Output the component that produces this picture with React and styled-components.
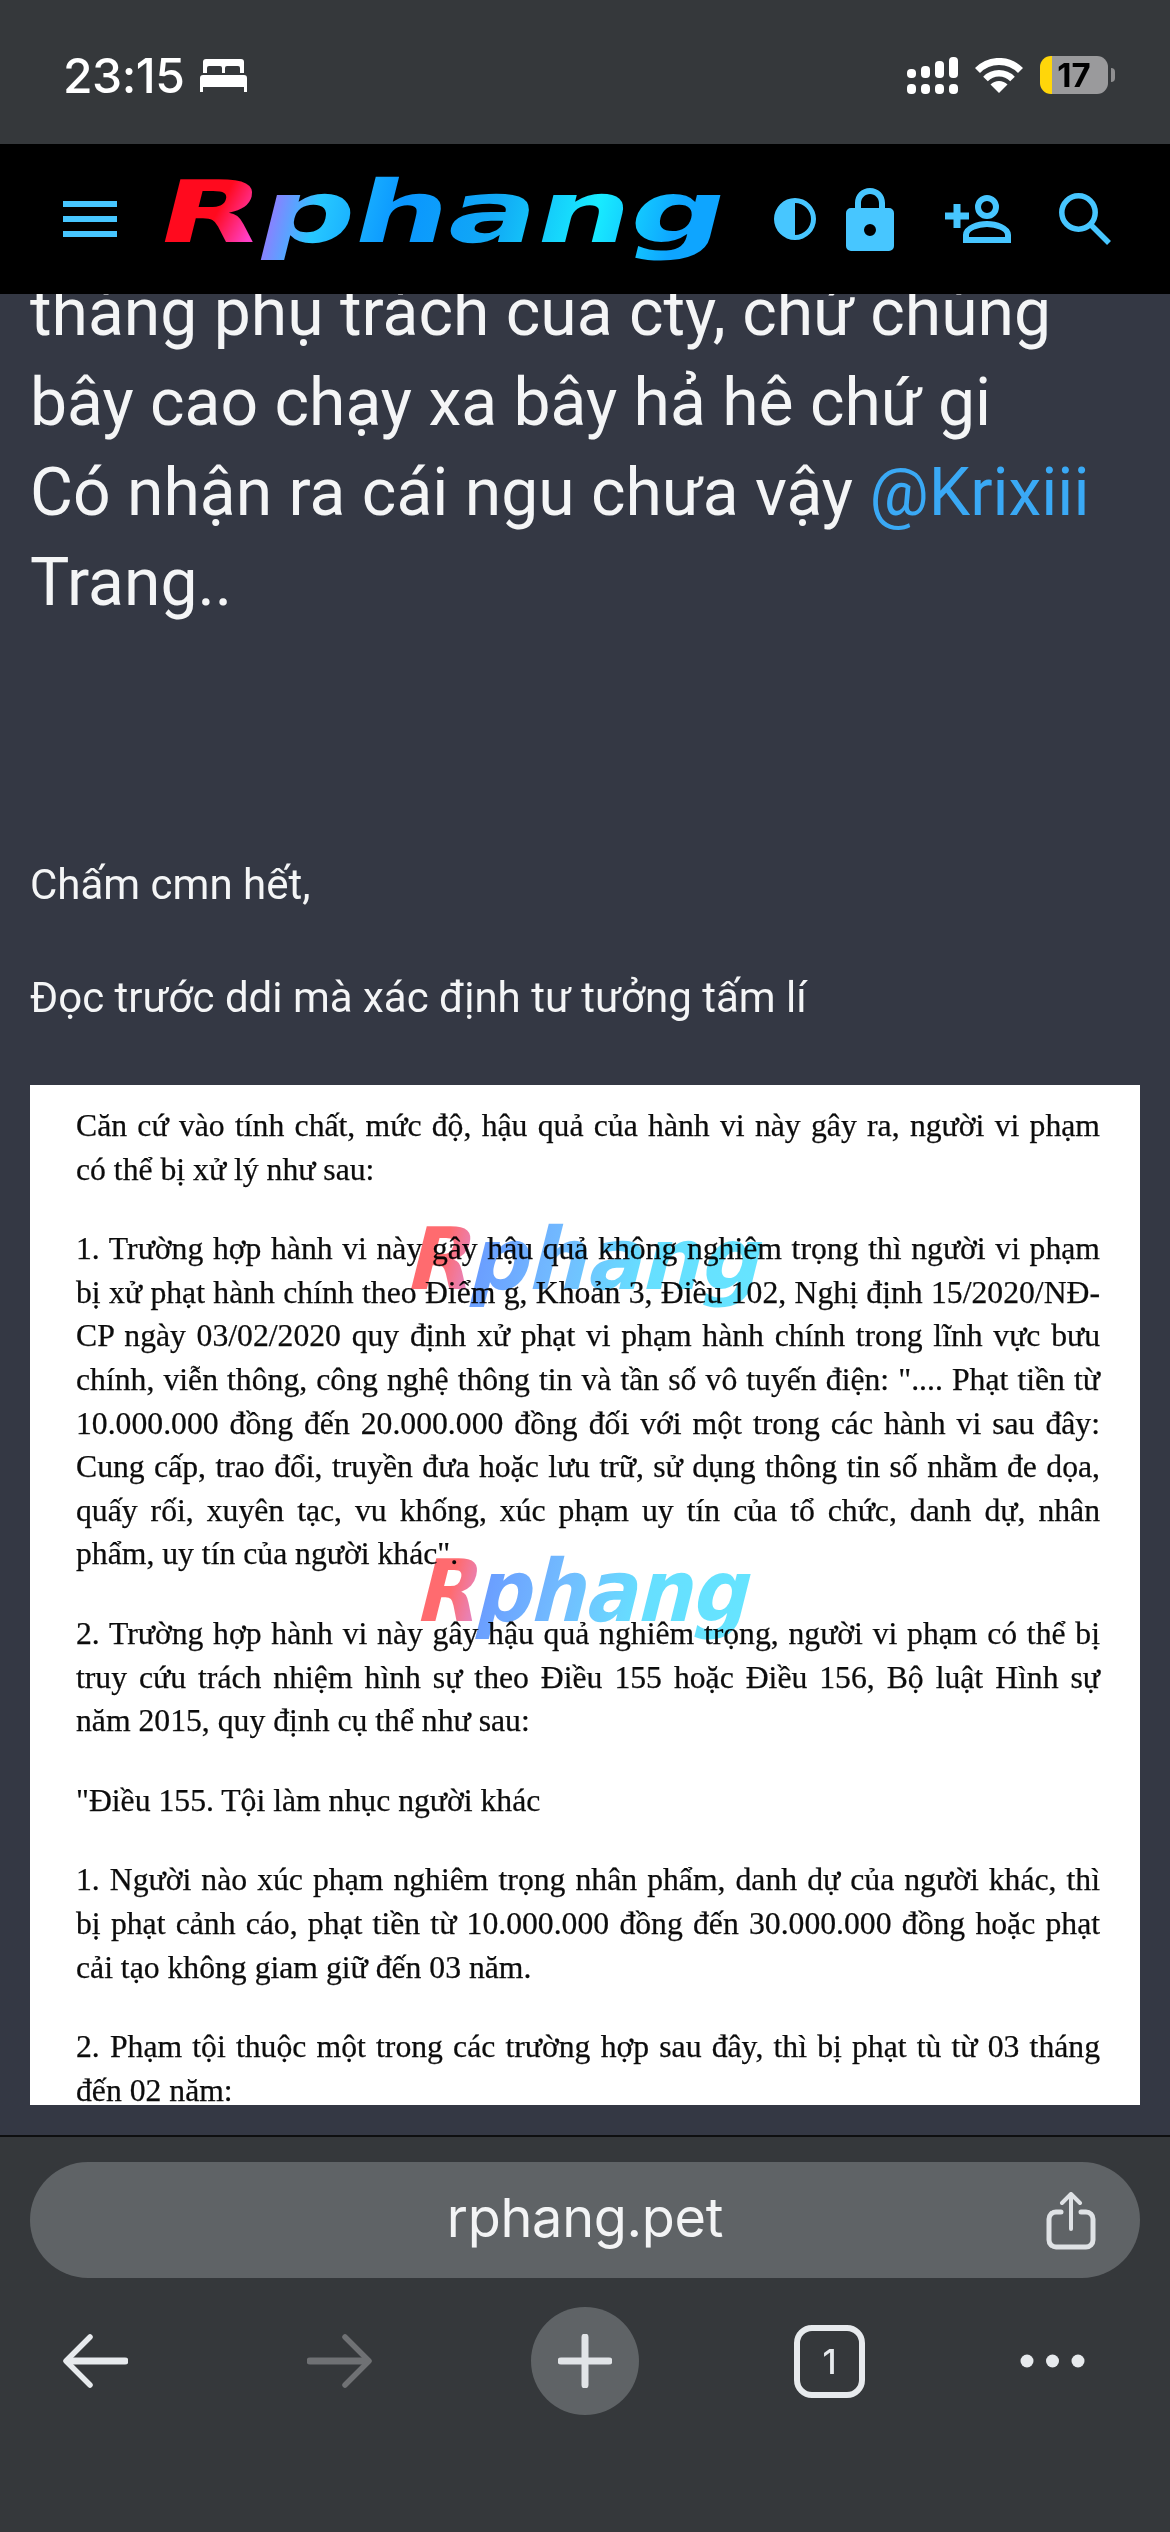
import React from "react";
import styled, { createGlobalStyle } from "styled-components";

const Global = createGlobalStyle`
  html, body { margin: 0; padding: 0; background: #35383b; }
  * { box-sizing: border-box; }
`;
const Page = styled.div`
  width: 1170px; height: 2532px; display: flex; flex-direction: column; overflow: hidden;
  font-family: Roboto, "Noto Sans", sans-serif; background: #343844; color: #fff;
`;
const StatusBar = styled.div`
  height: 144px; flex: none; background: #35383b; display: flex; align-items: center;
  justify-content: space-between; padding: 6px 62px 0 63px;
`;
const StatusGroup = styled.div`display: flex; align-items: center; gap: ${p => p.$gap}px;`;
const Time = styled.span`font: 500 48px Inter, sans-serif; letter-spacing: -0.5px;`;
const Battery = styled.div`
  width: 68px; height: 38px; border-radius: 11px; background: linear-gradient(90deg, #ffd60a 0 12px, #9a9a9c 12px);
  color: #000; font: 700 33px Inter, sans-serif; display: flex; align-items: center; justify-content: center;
  position: relative;
  &::after { content: ""; position: absolute; right: -7px; top: 12px; width: 4px; height: 14px; border-radius: 0 7px 7px 0; background: #8f8f91; }
`;
const Header = styled.header`
  height: 150px; flex: none; background: #000; display: flex; align-items: center; padding: 0 59px 0 63px; color: #47c6ff;
`;
const LogoSlot = styled.div`margin-left: 48px; width: 555px; height: 100px; flex: none; display: flex; align-items: center; padding-bottom: 14px;`;
const LogoText = styled.span`
  display: inline-block; font: 700 ${p => p.$size}px/1.1 "DejaVu Sans", sans-serif; white-space: nowrap;
  letter-spacing: -1px; transform-origin: 0 50%; transform: translateX(-5px) skewX(-14deg) scaleX(${p => p.$sx});
`;
const LogoR = styled.span`
  color: transparent; background: ${p => p.$soft ? "linear-gradient(90deg,#ff6b6f 50%,#e585c0)" : "linear-gradient(100deg,#ff0a1e 55%,#ff40c8 90%)"};
  -webkit-background-clip: text; background-clip: text;
`;
const LogoRest = styled.span`
  color: transparent; background: ${p => p.$soft ? "linear-gradient(90deg,#6a9cff,#72bcff 30%,#66dfff 60%,#66e4ff)" : "linear-gradient(90deg,#a070ff,#27c8ff 12%,#0a96ff 30%,#11a8f5 50%,#18ecff 72%,#0ea5ff 90%)"};
  -webkit-background-clip: text; background-clip: text;
`;
const HeaderIcons = styled.div`display: flex; align-items: center; margin-left: auto; gap: 48px;`;
const IconPair = styled.div`display: flex; align-items: center; gap: 30px; margin-right: 3px;`;
const Content = styled.main`flex: 1; min-height: 0; overflow: hidden; padding: 0 30px;`;
const BigText = styled.div`margin-top: -26px; font-size: 66px; line-height: 90px; color: #f4f5f6;`;
const Mention = styled.span`color: #3aa9f5;`;
const SmallText = styled.p`margin: ${p => p.$top}px 0 0; font-size: 42px; line-height: 56px; color: #f4f5f6;`;
const Doc = styled.article`
  position: relative; margin-top: 59px; height: 1020px; background: #fff; overflow: hidden; padding: 19px 40px 0 46px; color: #0c0c0c;
  font-family: "Liberation Serif", serif; font-size: 31.7px; line-height: 43.6px; -webkit-text-stroke: .25px #0c0c0c;
`;
const Para = styled.p`margin: 0 0 36px;`;
const Line = styled.span`display: block; white-space: nowrap; text-align: justify; text-align-last: ${p => p.$last ? "left" : "justify"};`;
const Watermark = styled.div`
  position: absolute; left: ${p => p.$x}px; top: ${p => p.$y}px; mix-blend-mode: multiply; -webkit-text-stroke: 0;
`;
const BrowserBar = styled.footer`
  height: 397px; flex: none; background: #35383b; border-top: 2px solid #0e0f10; padding: 25px 30px 0;
`;
const UrlPill = styled.div`
  height: 116px; border-radius: 58px; background: #5f6366; position: relative; display: flex; align-items: center; justify-content: center;
  font: 400 54px Inter, sans-serif; letter-spacing: -.3px; color: #f3f4f5; padding-bottom: 6px;
`;
const ShareWrap = styled.div`position: absolute; right: 44px; top: 30px; display: flex;`;
const Nav = styled.nav`
  margin-top: 29px; height: 108px; display: flex; align-items: center; padding-left: 32px; gap: 155px;
`;
const Arrow = styled.svg`flex: none; margin-right: ${p => p.$after}px;`;
const PlusCircle = styled.div`width: 108px; height: 108px; flex: none; border-radius: 50%; background: #5f6366; display: flex; align-items: center; justify-content: center;`;
const TabBox = styled.div`
  width: 71px; height: 73px; flex: none; border: 6px solid #e7eaed; border-radius: 18px; display: flex; align-items: center; justify-content: center;
  font: 500 34px Inter, sans-serif; color: #e7eaed;
`;

function Logo({ size, sx, soft }) {
  return (
    <LogoText $size={size} $sx={sx}>
      <LogoR $soft={soft}>R</LogoR><LogoRest $soft={soft}>phang</LogoRest>
    </LogoText>
  );
}

const doc = [
  ["Căn cứ vào tính chất, mức độ, hậu quả của hành vi này gây ra, người vi phạm", "có thể bị xử lý như sau:"],
  ["1. Trường hợp hành vi này gây hậu quả không nghiêm trọng thì người vi phạm", "bị xử phạt hành chính theo Điểm g, Khoản 3, Điều 102, Nghị định 15/2020/NĐ-", "CP ngày 03/02/2020 quy định xử phạt vi phạm hành chính trong lĩnh vực bưu", "chính, viễn thông, công nghệ thông tin và tần số vô tuyến điện: \".... Phạt tiền từ", "10.000.000 đồng đến 20.000.000 đồng đối với một trong các hành vi sau đây:", "Cung cấp, trao đổi, truyền đưa hoặc lưu trữ, sử dụng thông tin số nhằm đe dọa,", "quấy rối, xuyên tạc, vu khống, xúc phạm uy tín của tổ chức, danh dự, nhân", "phẩm, uy tín của người khác\"."],
  ["2. Trường hợp hành vi này gây hậu quả nghiêm trọng, người vi phạm có thể bị", "truy cứu trách nhiệm hình sự theo Điều 155 hoặc Điều 156, Bộ luật Hình sự", "năm 2015, quy định cụ thể như sau:"],
  ["\"Điều 155. Tội làm nhục người khác"],
  ["1. Người nào xúc phạm nghiêm trọng nhân phẩm, danh dự của người khác, thì", "bị phạt cảnh cáo, phạt tiền từ 10.000.000 đồng đến 30.000.000 đồng hoặc phạt", "cải tạo không giam giữ đến 03 năm."],
  ["2. Phạm tội thuộc một trong các trường hợp sau đây, thì bị phạt tù từ 03 tháng", "đến 02 năm:"],
];

export default function App() {
  return (
    <Page>
      <Global />
      <StatusBar>
        <StatusGroup $gap={16}>
          <Time>23:15</Time>
          <svg width="47" height="33" viewBox="0 0 47 33" fill="#fff">
            <path d="M6 0h35a3 3 0 0 1 3 3v11h-4v-5a2 2 0 0 0-2-2H27a2 2 0 0 0-2 2v5h-3V9a2 2 0 0 0-2-2H9a2 2 0 0 0-2 2v5H3V3a3 3 0 0 1 3-3z" />
            <path d="M3 16h41a3 3 0 0 1 3 3v14h-3v-5H3v5H0V19a3 3 0 0 1 3-3z" />
          </svg>
        </StatusGroup>
        <StatusGroup $gap={17}>
          <svg width="51" height="37" viewBox="0 0 51 37" fill="#fff">
            <rect x="0" y="12" width="9" height="9" rx="4" /><rect x="0" y="27" width="9" height="10" rx="4" />
            <rect x="14" y="9" width="9" height="12" rx="4" /><rect x="14" y="27" width="9" height="10" rx="4" />
            <rect x="28" y="4" width="9" height="17" rx="4" /><rect x="28" y="27" width="9" height="10" rx="4" />
            <rect x="42" y="0" width="9" height="21" rx="4" /><rect x="42" y="27" width="9" height="10" rx="4" />
          </svg>
          <svg width="48" height="35" viewBox="0 0 48 35" fill="none" stroke="#fff">
            <path fill="#fff" stroke="none" d="M24 35 15.500 26.500a12 12 0 0 1 17 0z" />
            <path strokeWidth="6.500" d="M10.500 21a19 19 0 0 1 27 0" />
            <path strokeWidth="7" d="M2.500 12.500a30 30 0 0 1 43 0" />
          </svg>
          <Battery>17</Battery>
        </StatusGroup>
      </StatusBar>
      <Header>
        <svg width="54" height="36" viewBox="0 0 54 36" fill="currentColor">
          <rect width="54" height="6" /><rect y="15" width="54" height="6" /><rect y="30" width="54" height="6" />
        </svg>
        <LogoSlot><Logo size={86} sx={1.555} /></LogoSlot>
        <HeaderIcons>
          <IconPair>
            <svg width="42" height="42" viewBox="0 0 42 42" fill="currentColor">
              <path fillRule="evenodd" d="M21 0a21 21 0 1 1 0 42 21 21 0 0 1 0-42zm0 5v32a16 16 0 0 0 0-32z" />
            </svg>
            <svg width="48" height="63" viewBox="0 0 48 63" fill="currentColor">
              <path fillRule="evenodd" d="M24 0c8.500 0 15 6.500 15 15v5h4a5 5 0 0 1 5 5v33a5 5 0 0 1-5 5H5a5 5 0 0 1-5-5V25a5 5 0 0 1 5-5h4v-5C9 6.500 15.500 0 24 0zm0 6c-5 0-9 4-9 9v5h18v-5c0-5-4-9-9-9zm0 30a6 6 0 1 0 0 12 6 6 0 0 0 0-12z" />
            </svg>
          </IconPair>
          <svg width="66" height="48" viewBox="0 0 66 48" fill="none" stroke="currentColor" strokeWidth="6">
            <circle cx="42" cy="12" r="9" />
            <path d="M21 45v-5c0-7 12-11 21-11s21 4 21 11v5z" />
            <path strokeWidth="7" d="M0 21h24M12 9v24" />
          </svg>
          <svg width="52" height="52" viewBox="0 0 52 52" fill="none" stroke="currentColor" strokeWidth="5.500">
            <circle cx="19.500" cy="19.500" r="16.700" />
            <path d="M32 32l18 18" />
          </svg>
        </HeaderIcons>
      </Header>
      <Content>
        <BigText>
          tháng phụ trách của cty, chứ chúng<br />
          bây cao chạy xa bây hả hê chứ gi<br />
          Có nhận ra cái ngu chưa vậy <Mention>@Krixiii</Mention><br />
          Trang..
        </BigText>
        <SmallText $top={229}>Chấm cmn hết,</SmallText>
        <SmallText $top={57}>Đọc trước ddi mà xác định tư tưởng tấm lí</SmallText>
        <Doc>
          {doc.map((lines, i) => (
            <Para key={i}>
              {lines.map((l, j) => <Line key={j} $last={j === lines.length - 1}>{l}</Line>)}
            </Para>
          ))}
          <Watermark $x={386} $y={127}><Logo size={86} sx={0.97} soft /></Watermark>
          <Watermark $x={396} $y={459}><Logo size={86} sx={0.91} soft /></Watermark>
        </Doc>
      </Content>
      <BrowserBar>
        <UrlPill>
          rphang.pet
          <ShareWrap>
            <svg width="50" height="58" viewBox="0 0 50 58" fill="none" stroke="#dfe2e5" strokeLinecap="round" strokeLinejoin="round">
              <path strokeWidth="5" d="M15 20H10a7 7 0 0 0-7 7v21a7 7 0 0 0 7 7h30a7 7 0 0 0 7-7V27a7 7 0 0 0-7-7h-5" />
              <path strokeWidth="4" d="M25 37V3M16 11l9-9 9 9" />
            </svg>
          </ShareWrap>
        </UrlPill>
        <Nav>
          <Arrow $after={24} width="66" height="54" viewBox="0 0 66 54" fill="none" stroke="#e7eaed" strokeLinecap="round" strokeLinejoin="round">
            <path strokeWidth="7" d="M63 27H6" />
            <path strokeWidth="5.500" d="M28 3 4 27l24 24" />
          </Arrow>
          <Arrow $after={3} width="66" height="54" viewBox="0 0 66 54" fill="none" stroke="#6f7174" strokeLinecap="round" strokeLinejoin="round">
            <path strokeWidth="7" d="M3 27h57" />
            <path strokeWidth="5.500" d="M38 3l24 24-24 24" />
          </Arrow>
          <PlusCircle>
            <svg width="54" height="54" viewBox="0 0 54 54" fill="none" stroke="#e1e4e7" strokeWidth="7" strokeLinecap="round">
              <path d="M27 3v48M3 27h48" />
            </svg>
          </PlusCircle>
          <TabBox>1</TabBox>
          <Arrow $after={0} width="65" height="14" viewBox="0 0 65 14" fill="#e7eaed">
            <circle cx="7" cy="7" r="6.500" /><circle cx="32.500" cy="7" r="6.500" /><circle cx="58" cy="7" r="6.500" />
          </Arrow>
        </Nav>
      </BrowserBar>
    </Page>
  );
}
